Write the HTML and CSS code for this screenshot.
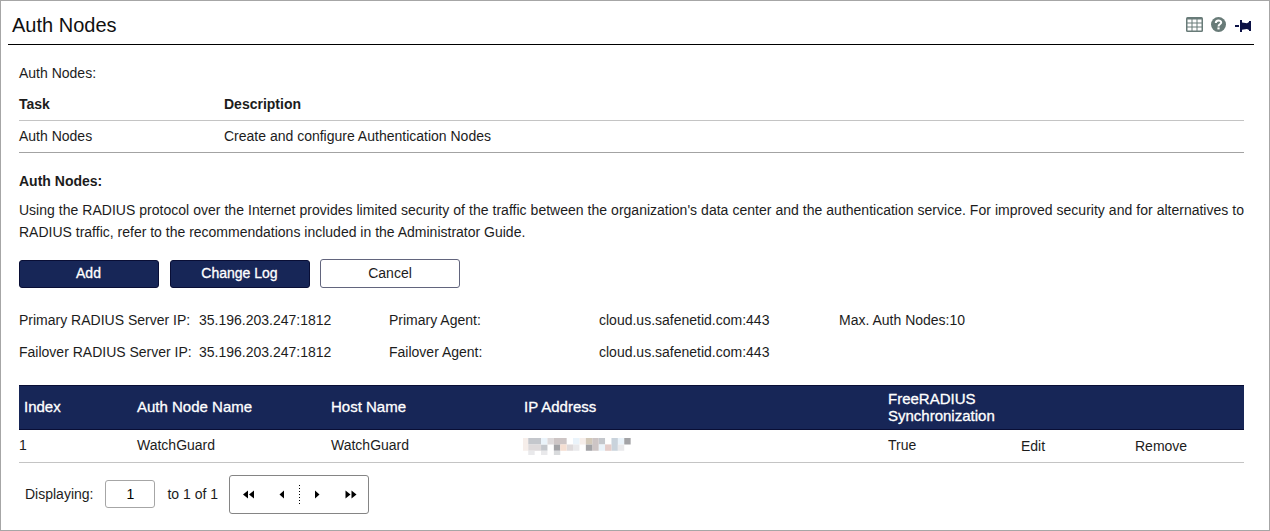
FILE: index.html
```html
<!DOCTYPE html>
<html lang="en">
<head>
<meta charset="utf-8">
<title>Auth Nodes</title>
<link rel="stylesheet" href="styles.css">
</head>
<body>
<main class="panel">
  <header class="titlebar">
    <h1 class="title">Auth Nodes</h1>
    <div class="tools">
      <svg class="icon-grid" width="17" height="15" viewBox="0 0 17 15"><rect width="17" height="15" rx="1.500" fill="#687b78"/><path fill="#fff" d="M1.500 2.500h4v3h-4zM6.500 2.500h4v3h-4zM11.500 2.500h4v3h-4zM1.500 6.500h4v3h-4zM6.500 6.500h4v3h-4zM11.500 6.500h4v3h-4zM1.500 10.500h4v3h-4zM6.500 10.500h4v3h-4zM11.500 10.500h4v3h-4z"/></svg>
      <svg class="icon-help" width="15" height="15" viewBox="0 0 15 15"><circle cx="7.500" cy="7.500" r="7.500" fill="#687b78"/><path d="M4.800 6C4.800 2.500 10.200 2.700 10.200 5.600 10.200 7.400 7.500 7.200 7.500 9.400" fill="none" stroke="#fff" stroke-width="2"/><rect x="6.400" y="10.400" width="2.200" height="2" fill="#fff"/></svg>
      <svg class="icon-pin" width="16" height="12" viewBox="0 0 16 12"><path fill="#0b1145" d="M0 5h4v2H0zM5 0h2v2.500l5 .7L14 2V1h2v10h-2v-1l-2-1-5 .7V12H5z"/></svg>
    </div>
  </header>
  <div class="content">
    <p class="caption">Auth Nodes:</p>
    <div class="task-row task-head"><span>Task</span><span>Description</span></div>
    <div class="task-row task-item"><span>Auth Nodes</span><span>Create and configure Authentication Nodes</span></div>
    <h2 class="section">Auth Nodes:</h2>
    <p class="notice">Using the RADIUS protocol over the Internet provides limited security of the traffic between the organization's data center and the authentication service. For improved security and for alternatives to RADIUS traffic, refer to the recommendations included in the Administrator Guide.</p>
    <div class="actions">
      <button class="btn primary">Add</button>
      <button class="btn primary">Change Log</button>
      <button class="btn">Cancel</button>
    </div>
    <div class="servers">
      <span>Primary RADIUS Server IP:</span><span>35.196.203.247:1812</span><span>Primary Agent:</span><span>cloud.us.safenetid.com:443</span><span>Max. Auth Nodes:10</span>
      <span>Failover RADIUS Server IP:</span><span>35.196.203.247:1812</span><span>Failover Agent:</span><span>cloud.us.safenetid.com:443</span><span></span>
    </div>
    <div class="node-row node-head"><span class="index">Index</span><span>Auth Node Name</span><span>Host Name</span><span>IP Address</span><span>FreeRADIUS Synchronization</span><span></span><span></span></div>
    <div class="node-row node-item">
      <span>1</span><span>WatchGuard</span><span>WatchGuard</span>
      <svg class="masked" width="108" height="17" viewBox="1.300 0 107.700 17">
        <g transform="scale(6.400)">
          <path fill="#f6eeea" d="M0 0h1v2H0zM9 0h1v1H9z"/>
          <path fill="#c4c7cc" d="M1 0h2v1H1zM12 0h1v1h-1zM3 1h1v1H3z"/>
          <path fill="#eaf3fa" d="M3 0h1v1H3zM8 0h1v1H8zM15 0h1v1h-1zM12 1h1v1h-1z"/>
          <path fill="#dedadb" d="M4 0h1v1H4zM1 1h2v1H1zM7 1h1v1H7z"/>
          <path fill="#cdc5c5" d="M5 0h2v1H5zM11 0h1v1h-1zM11 1h1v1h-1z"/>
          <path fill="#d3c9b9" d="M10 0h1v1h-1z"/>
          <path fill="#c9d3dc" d="M14 0h1v1h-1zM14 1h1v1h-1z"/>
          <path fill="#a3a3a6" d="M16 0h1v1h-1zM5 1h1v1H5zM10 1h1v1h-1z"/>
          <path fill="#f5dfd2" d="M6 1h1v1H6z"/>
          <path fill="#e4cdca" d="M13 1h1v1h-1z"/>
          <path fill="#e9e9eb" d="M8 1h1v1H8zM15 1h1v1h-1zM1 2h1v.7H1zM3 2h1v.7H3z"/>
          <path fill="#d9dbdd" d="M5 2h1v.7H5z"/>
        </g>
      </svg>
      <span>True</span><span class="link">Edit</span><span class="link">Remove</span>
    </div>
    <div class="pager">
      <span>Displaying:</span>
      <input class="page" value="1" aria-label="Page">
      <span class="total">to 1 of 1</span>
      <div class="nav">
        <svg width="138" height="37" viewBox="0 0 138 37"><path d="M13 18.500l5-4v8zM19 18.500l5-4v8zM49.500 18.500l4.500-4v8zM85 14.500l4.500 4-4.500 4zM115.500 14.500l5 4-5 4zM121.500 14.500l5 4-5 4z"/><path d="M69.500 9v20" stroke="#000" stroke-dasharray="1 2"/></svg>
      </div>
    </div>
  </div>
</main>
</body>
</html>
```
FILE: styles.css
```css
* { box-sizing: border-box; }
body { margin: 0; background: #fff; color: #1c1c1c; font: 14px/20px "Liberation Sans", Arial, sans-serif; }
h1, h2, p { margin: 0; }
.panel { height: 531px; padding: 6px 15px 0 7px; border: 1px solid #a6a6a6; }
.titlebar { display: flex; justify-content: space-between; height: 38px; padding: 0 3px 0 4px; border-bottom: 1px solid #000; }
.title { color: #101010; font-size: 20px; font-weight: 400; line-height: 37px; }
.tools { display: flex; align-items: flex-start; gap: 8px; padding-top: 10px; }
.icon-pin { margin: 3px 0 0 1px; }
.content { padding: 18px 10px 0 11px; }
.caption { height: 25px; }
.task-row { display: grid; grid-template-columns: 205px 1fr; }
.task-head { height: 33px; padding-top: 6px; font-weight: 700; border-bottom: 1px solid #c4c4c4; }
.task-item { height: 32px; padding-top: 5px; border-bottom: 1px solid #a3a3a3; }
.section { margin-top: 18px; font-size: 14px; line-height: 20px; }
.notice { margin-top: 8px; line-height: 22px; text-align: justify; }
.actions { display: flex; align-items: flex-end; gap: 11px; margin-top: 16px; }
.btn { width: 140px; height: 29px; margin-left: -1px; padding: 0 0 2px; border: 1px solid #62657d; border-radius: 3px; background: #fff; color: #1c1c1c; font: inherit; }
.primary { height: 28px; margin-left: 0; padding: 0 1px 3px 0; border-color: #090e35; background: #172657; color: #fff; -webkit-text-stroke: 0.3px #fff; }
.servers { display: grid; grid-template-columns: 180px 190px 210px 240px 1fr; grid-auto-rows: 32px; margin-top: 16px; line-height: 32px; white-space: nowrap; }
.node-row { display: grid; grid-template-columns: 118px 194px 193px 364px 133px 114px 1fr; align-items: center; }
.node-head { height: 45px; margin-top: 17px; padding-bottom: 1px; background: #172657; border: 1px solid #090e35; border-width: 1px 0; color: #fff; font-size: 15px; line-height: 17.500px; -webkit-text-stroke: 0.3px #fff; }
.node-head .index { padding-left: 5px; }
.node-item { height: 33px; padding-bottom: 2px; border-bottom: 1px solid #c4c4c4; }
.node-item .link { padding-top: 1px; }
.masked { margin: 2px 0 0 -1px; }
.pager { display: flex; align-items: center; height: 62px; padding-left: 6px; }
.page { width: 50px; height: 28px; margin: 0 12px; border: 1px solid #a6a6a6; border-radius: 3px; text-align: center; font: inherit; }
.nav { width: 140px; height: 39px; margin-left: 11px; border: 1px solid #858585; border-radius: 3px; }
.nav svg { display: block; }
```
